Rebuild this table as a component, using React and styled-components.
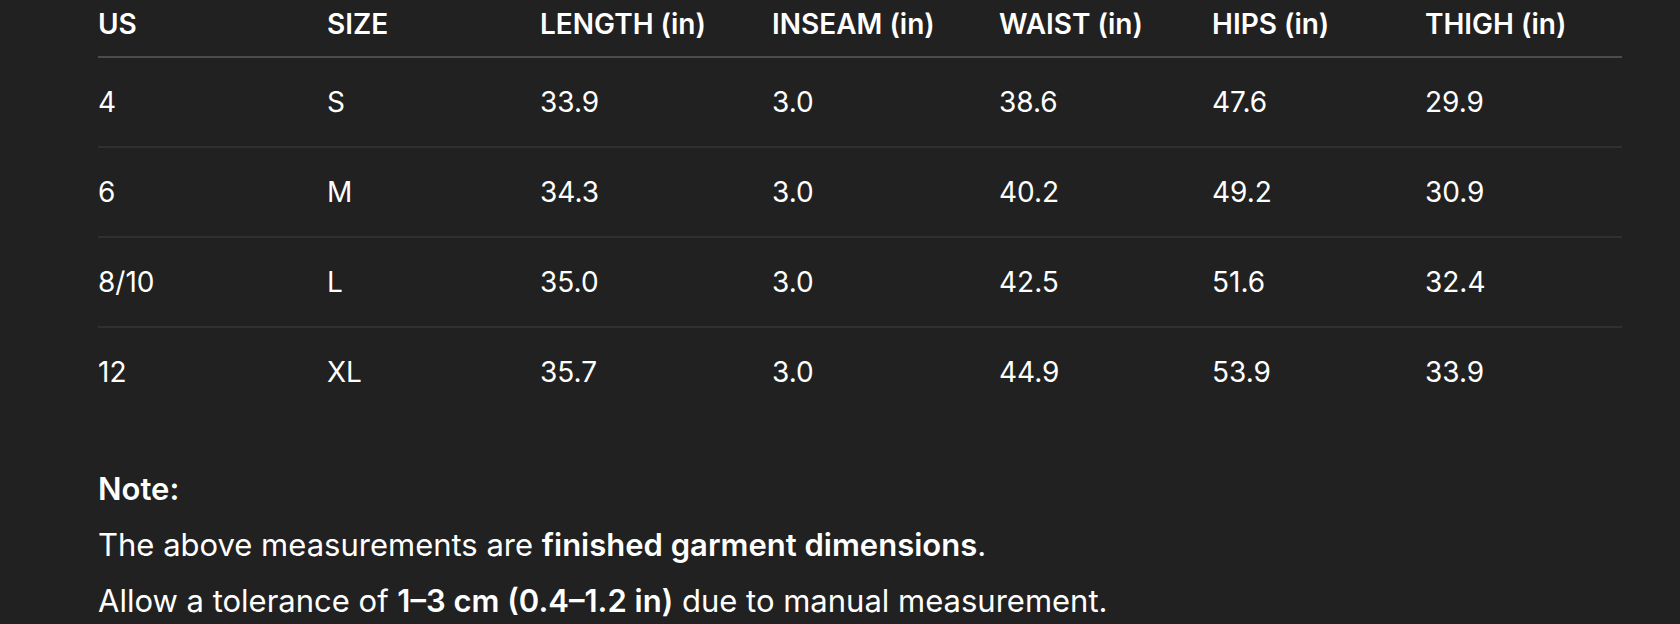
import React from "react";
import styled, { createGlobalStyle } from "styled-components";

const GlobalStyle = createGlobalStyle`
  html, body {
    margin: 0;
    padding: 0;
    background: #212121;
  }
  body {
    font-family: Inter, "Noto Sans", "Liberation Sans", sans-serif;
    color: #ffffff;
    -webkit-font-smoothing: antialiased;
  }
`;

const columns = [
  { key: "us", label: "US", width: 229 },
  { key: "size", label: "SIZE", width: 213 },
  { key: "length", label: "LENGTH (in)", width: 232 },
  { key: "inseam", label: "INSEAM (in)", width: 227 },
  { key: "waist", label: "WAIST (in)", width: 213 },
  { key: "hips", label: "HIPS (in)", width: 213 },
  { key: "thigh", label: "THIGH (in)", width: 197 },
];

const rows = [
  { us: "4", size: "S", length: "33.9", inseam: "3.0", waist: "38.6", hips: "47.6", thigh: "29.9" },
  { us: "6", size: "M", length: "34.3", inseam: "3.0", waist: "40.2", hips: "49.2", thigh: "30.9" },
  { us: "8/10", size: "L", length: "35.0", inseam: "3.0", waist: "42.5", hips: "51.6", thigh: "32.4" },
  { us: "12", size: "XL", length: "35.7", inseam: "3.0", waist: "44.9", hips: "53.9", thigh: "33.9" },
];

const Page = styled.main`
  width: 1680px;
  height: 624px;
  overflow: hidden;
  padding-left: 98px;
  box-sizing: border-box;
`;

const Table = styled.table`
  width: 1524px;
  table-layout: fixed;
  border-collapse: collapse;
  font-size: 28px;
`;

const HeadCell = styled.th`
  text-align: left;
  font-weight: 600;
  line-height: 40px;
  padding: 4px 0 12px;
  white-space: nowrap;
  border-bottom: 2px solid #4b4b4b;
`;

const Row = styled.tr`
  border-bottom: 2px solid ${(p) => (p.$last ? "transparent" : "#303030")};
`;

const Cell = styled.td`
  text-align: left;
  font-weight: 400;
  line-height: 40px;
  padding: 24px 0;
  white-space: nowrap;
`;

const Notes = styled.section`
  margin-top: 43px;
  font-size: 31px;
  line-height: 56px;
`;

const Line = styled.p`
  margin: 0;
  white-space: nowrap;
`;

const Strong = styled.strong`
  font-weight: 600;
`;

export default function App() {
  return (
    <>
      <GlobalStyle />
      <Page>
        <Table>
          <colgroup>
            {columns.map((c) => (
              <col key={c.key} style={{ width: c.width }} />
            ))}
          </colgroup>
          <thead>
            <tr>
              {columns.map((c) => (
                <HeadCell key={c.key}>{c.label}</HeadCell>
              ))}
            </tr>
          </thead>
          <tbody>
            {rows.map((r, i) => (
              <Row key={r.us} $last={i === rows.length - 1}>
                {columns.map((c) => (
                  <Cell key={c.key}>{r[c.key]}</Cell>
                ))}
              </Row>
            ))}
          </tbody>
        </Table>
        <Notes>
          <Line>
            <Strong>Note:</Strong>
          </Line>
          <Line>
            The above measurements are <Strong>finished garment dimensions</Strong>.
          </Line>
          <Line>
            Allow a tolerance of <Strong>1–3 cm (0.4–1.2 in)</Strong> due to manual measurement.
          </Line>
        </Notes>
      </Page>
    </>
  );
}
